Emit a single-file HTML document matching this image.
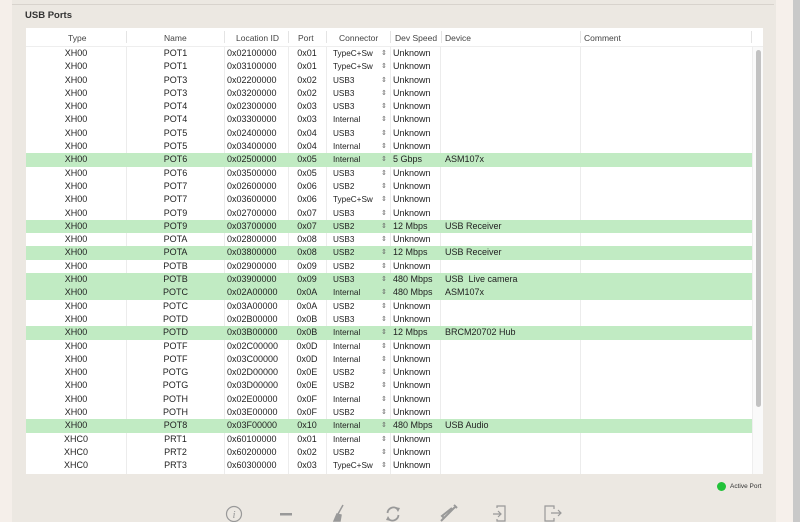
<!DOCTYPE html>
<html><head><style>
*{margin:0;padding:0;box-sizing:border-box}
body{width:800px;height:522px;overflow:hidden;background:#ece8e2;font-family:"Liberation Sans",sans-serif;position:relative;color:#222}
.l{position:absolute;left:0;top:0;width:12px;height:522px;background:#f5efea}
.r1{position:absolute;left:776px;top:0;width:17px;height:522px;background:#f6f0eb}
.r2{position:absolute;left:793px;top:0;width:7px;height:522px;background:#c9c9c9}
.top{position:absolute;left:12px;top:4px;width:762px;height:1px;background:#d8d3cd}
h1{position:absolute;left:25px;top:10px;font-size:9.5px;font-weight:bold;color:#333}
.tbl{position:absolute;left:26px;top:28px;width:737px;height:446px;background:#fff}
.hd{position:absolute;left:0;top:0;height:19px;width:737px;border-bottom:1px solid #eee;font-size:8.5px;color:#444}
.hd span{position:absolute;top:5px}
.hd i{position:absolute;top:3px;width:1px;height:12px;background:#e4e4e4}
.rows{position:absolute;left:0;top:19px;width:726px}
.row{position:relative;height:13.3px;font-size:9px;line-height:13.3px;color:#222}
.row.g{background:#c1ebc3}
.row span{position:absolute;top:0;white-space:pre}
.c1{left:0;width:100px;text-align:center}
.c2{left:101px;width:97px;text-align:center}
.c3{left:201px}
.c4{left:262px;width:38px;text-align:center}
.c5{left:307px;font-size:8.2px}
.c6{left:355px;font-size:7px;color:#666}
.c7{left:367px}
.c8{left:419px}
.vl{position:absolute;top:19px;width:1px;height:427px;background:#ececec}
.sb{position:absolute;left:726px;top:19px;width:11px;height:427px;background:#fafafa;border-left:1px solid #eee}
.th{position:absolute;left:3px;top:3px;width:5px;height:357px;background:#c2c2c2;border-radius:3px}
.ap{position:absolute;left:717px;top:482px;width:9px;height:9px;border-radius:50%;background:#22c23a}
.apt{position:absolute;left:730px;top:483px;font-size:6.5px;color:#333}
.ic{position:absolute;top:504px}
</style></head><body>
<div class="l"></div><div class="r1"></div><div class="r2"></div>
<div class="top"></div>
<h1>USB Ports</h1>
<div class="tbl">
<div class="hd">
<span style="left:42px">Type</span><i style="left:100px"></i>
<span style="left:138px">Name</span><i style="left:198px"></i>
<span style="left:210px">Location ID</span><i style="left:262px"></i>
<span style="left:272px">Port</span><i style="left:300px"></i>
<span style="left:313px">Connector</span><i style="left:364px"></i>
<span style="left:369px">Dev Speed</span><i style="left:415px"></i>
<span style="left:419px">Device</span><i style="left:554px"></i>
<span style="left:558px">Comment</span><i style="left:725px"></i>
</div>
<div class="vl" style="left:100px"></div><div class="vl" style="left:198px"></div><div class="vl" style="left:262px"></div><div class="vl" style="left:300px"></div><div class="vl" style="left:364px"></div><div class="vl" style="left:414px"></div><div class="vl" style="left:554px"></div>
<div class="rows">
<div class="row"><span class="c1">XH00</span><span class="c2">POT1</span><span class="c3">0x02100000</span><span class="c4">0x01</span><span class="c5">TypeC+Sw</span><span class="c6">⇕</span><span class="c7">Unknown</span></div>
<div class="row"><span class="c1">XH00</span><span class="c2">POT1</span><span class="c3">0x03100000</span><span class="c4">0x01</span><span class="c5">TypeC+Sw</span><span class="c6">⇕</span><span class="c7">Unknown</span></div>
<div class="row"><span class="c1">XH00</span><span class="c2">POT3</span><span class="c3">0x02200000</span><span class="c4">0x02</span><span class="c5">USB3</span><span class="c6">⇕</span><span class="c7">Unknown</span></div>
<div class="row"><span class="c1">XH00</span><span class="c2">POT3</span><span class="c3">0x03200000</span><span class="c4">0x02</span><span class="c5">USB3</span><span class="c6">⇕</span><span class="c7">Unknown</span></div>
<div class="row"><span class="c1">XH00</span><span class="c2">POT4</span><span class="c3">0x02300000</span><span class="c4">0x03</span><span class="c5">USB3</span><span class="c6">⇕</span><span class="c7">Unknown</span></div>
<div class="row"><span class="c1">XH00</span><span class="c2">POT4</span><span class="c3">0x03300000</span><span class="c4">0x03</span><span class="c5">Internal</span><span class="c6">⇕</span><span class="c7">Unknown</span></div>
<div class="row"><span class="c1">XH00</span><span class="c2">POT5</span><span class="c3">0x02400000</span><span class="c4">0x04</span><span class="c5">USB3</span><span class="c6">⇕</span><span class="c7">Unknown</span></div>
<div class="row"><span class="c1">XH00</span><span class="c2">POT5</span><span class="c3">0x03400000</span><span class="c4">0x04</span><span class="c5">Internal</span><span class="c6">⇕</span><span class="c7">Unknown</span></div>
<div class="row g"><span class="c1">XH00</span><span class="c2">POT6</span><span class="c3">0x02500000</span><span class="c4">0x05</span><span class="c5">Internal</span><span class="c6">⇕</span><span class="c7">5 Gbps</span><span class="c8">ASM107x</span></div>
<div class="row"><span class="c1">XH00</span><span class="c2">POT6</span><span class="c3">0x03500000</span><span class="c4">0x05</span><span class="c5">USB3</span><span class="c6">⇕</span><span class="c7">Unknown</span></div>
<div class="row"><span class="c1">XH00</span><span class="c2">POT7</span><span class="c3">0x02600000</span><span class="c4">0x06</span><span class="c5">USB2</span><span class="c6">⇕</span><span class="c7">Unknown</span></div>
<div class="row"><span class="c1">XH00</span><span class="c2">POT7</span><span class="c3">0x03600000</span><span class="c4">0x06</span><span class="c5">TypeC+Sw</span><span class="c6">⇕</span><span class="c7">Unknown</span></div>
<div class="row"><span class="c1">XH00</span><span class="c2">POT9</span><span class="c3">0x02700000</span><span class="c4">0x07</span><span class="c5">USB3</span><span class="c6">⇕</span><span class="c7">Unknown</span></div>
<div class="row g"><span class="c1">XH00</span><span class="c2">POT9</span><span class="c3">0x03700000</span><span class="c4">0x07</span><span class="c5">USB2</span><span class="c6">⇕</span><span class="c7">12 Mbps</span><span class="c8">USB Receiver</span></div>
<div class="row"><span class="c1">XH00</span><span class="c2">POTA</span><span class="c3">0x02800000</span><span class="c4">0x08</span><span class="c5">USB3</span><span class="c6">⇕</span><span class="c7">Unknown</span></div>
<div class="row g"><span class="c1">XH00</span><span class="c2">POTA</span><span class="c3">0x03800000</span><span class="c4">0x08</span><span class="c5">USB2</span><span class="c6">⇕</span><span class="c7">12 Mbps</span><span class="c8">USB Receiver</span></div>
<div class="row"><span class="c1">XH00</span><span class="c2">POTB</span><span class="c3">0x02900000</span><span class="c4">0x09</span><span class="c5">USB2</span><span class="c6">⇕</span><span class="c7">Unknown</span></div>
<div class="row g"><span class="c1">XH00</span><span class="c2">POTB</span><span class="c3">0x03900000</span><span class="c4">0x09</span><span class="c5">USB3</span><span class="c6">⇕</span><span class="c7">480 Mbps</span><span class="c8">USB  Live camera</span></div>
<div class="row g"><span class="c1">XH00</span><span class="c2">POTC</span><span class="c3">0x02A00000</span><span class="c4">0x0A</span><span class="c5">Internal</span><span class="c6">⇕</span><span class="c7">480 Mbps</span><span class="c8">ASM107x</span></div>
<div class="row"><span class="c1">XH00</span><span class="c2">POTC</span><span class="c3">0x03A00000</span><span class="c4">0x0A</span><span class="c5">USB2</span><span class="c6">⇕</span><span class="c7">Unknown</span></div>
<div class="row"><span class="c1">XH00</span><span class="c2">POTD</span><span class="c3">0x02B00000</span><span class="c4">0x0B</span><span class="c5">USB3</span><span class="c6">⇕</span><span class="c7">Unknown</span></div>
<div class="row g"><span class="c1">XH00</span><span class="c2">POTD</span><span class="c3">0x03B00000</span><span class="c4">0x0B</span><span class="c5">Internal</span><span class="c6">⇕</span><span class="c7">12 Mbps</span><span class="c8">BRCM20702 Hub</span></div>
<div class="row"><span class="c1">XH00</span><span class="c2">POTF</span><span class="c3">0x02C00000</span><span class="c4">0x0D</span><span class="c5">Internal</span><span class="c6">⇕</span><span class="c7">Unknown</span></div>
<div class="row"><span class="c1">XH00</span><span class="c2">POTF</span><span class="c3">0x03C00000</span><span class="c4">0x0D</span><span class="c5">Internal</span><span class="c6">⇕</span><span class="c7">Unknown</span></div>
<div class="row"><span class="c1">XH00</span><span class="c2">POTG</span><span class="c3">0x02D00000</span><span class="c4">0x0E</span><span class="c5">USB2</span><span class="c6">⇕</span><span class="c7">Unknown</span></div>
<div class="row"><span class="c1">XH00</span><span class="c2">POTG</span><span class="c3">0x03D00000</span><span class="c4">0x0E</span><span class="c5">USB2</span><span class="c6">⇕</span><span class="c7">Unknown</span></div>
<div class="row"><span class="c1">XH00</span><span class="c2">POTH</span><span class="c3">0x02E00000</span><span class="c4">0x0F</span><span class="c5">Internal</span><span class="c6">⇕</span><span class="c7">Unknown</span></div>
<div class="row"><span class="c1">XH00</span><span class="c2">POTH</span><span class="c3">0x03E00000</span><span class="c4">0x0F</span><span class="c5">USB2</span><span class="c6">⇕</span><span class="c7">Unknown</span></div>
<div class="row g"><span class="c1">XH00</span><span class="c2">POT8</span><span class="c3">0x03F00000</span><span class="c4">0x10</span><span class="c5">Internal</span><span class="c6">⇕</span><span class="c7">480 Mbps</span><span class="c8">USB Audio</span></div>
<div class="row"><span class="c1">XHC0</span><span class="c2">PRT1</span><span class="c3">0x60100000</span><span class="c4">0x01</span><span class="c5">Internal</span><span class="c6">⇕</span><span class="c7">Unknown</span></div>
<div class="row"><span class="c1">XHC0</span><span class="c2">PRT2</span><span class="c3">0x60200000</span><span class="c4">0x02</span><span class="c5">USB2</span><span class="c6">⇕</span><span class="c7">Unknown</span></div>
<div class="row"><span class="c1">XHC0</span><span class="c2">PRT3</span><span class="c3">0x60300000</span><span class="c4">0x03</span><span class="c5">TypeC+Sw</span><span class="c6">⇕</span><span class="c7">Unknown</span></div>
</div>
<div class="sb"><div class="th"></div></div>
</div>
<div class="ap"></div><div class="apt">Active Port</div>
<svg class="ic" style="left:224px" width="20" height="18" viewBox="0 0 20 18"><circle cx="10" cy="10" r="7.5" fill="none" stroke="#999" stroke-width="1.2"/><text x="10" y="14" font-size="11" font-style="italic" font-family="Liberation Serif" fill="#999" text-anchor="middle">i</text></svg>
<svg class="ic" style="left:278px" width="18" height="18"><rect x="2" y="9" width="12" height="2.5" fill="#999"/></svg>
<svg class="ic" style="left:330px" width="18" height="18"><path d="M13 1 L8 10 M4 17 L7 10 L11 11 L10 17 Z" stroke="#999" stroke-width="1.5" fill="#999"/></svg>
<svg class="ic" style="left:384px" width="18" height="18"><path d="M3.5 9 A6 6 0 0 1 13.5 5 M14.5 11 A6 6 0 0 1 4.5 15" stroke="#999" stroke-width="1.8" fill="none"/><path d="M11 3 L16 4 L14 8Z M7 17 L2 16 L4 12Z" fill="#999"/></svg>
<svg class="ic" style="left:438px" width="20" height="18"><path d="M16 1 L19 4 M17 3 L6 14 L3 17 M6 14 L4 12 L14 4" stroke="#999" stroke-width="2" fill="none"/></svg>
<svg class="ic" style="left:490px" width="18" height="18"><path d="M7 4 V2 H15 V17 H7 V15 M3 10 H11 M8 7 L11 10 L8 13" stroke="#999" stroke-width="1.2" fill="none"/></svg>
<svg class="ic" style="left:543px" width="20" height="18"><path d="M11 5 V2 H2 V17 H11 V14 M8 9 H18 M15 6 L18 9 L15 12" stroke="#999" stroke-width="1.2" fill="none"/></svg>
</body></html>
